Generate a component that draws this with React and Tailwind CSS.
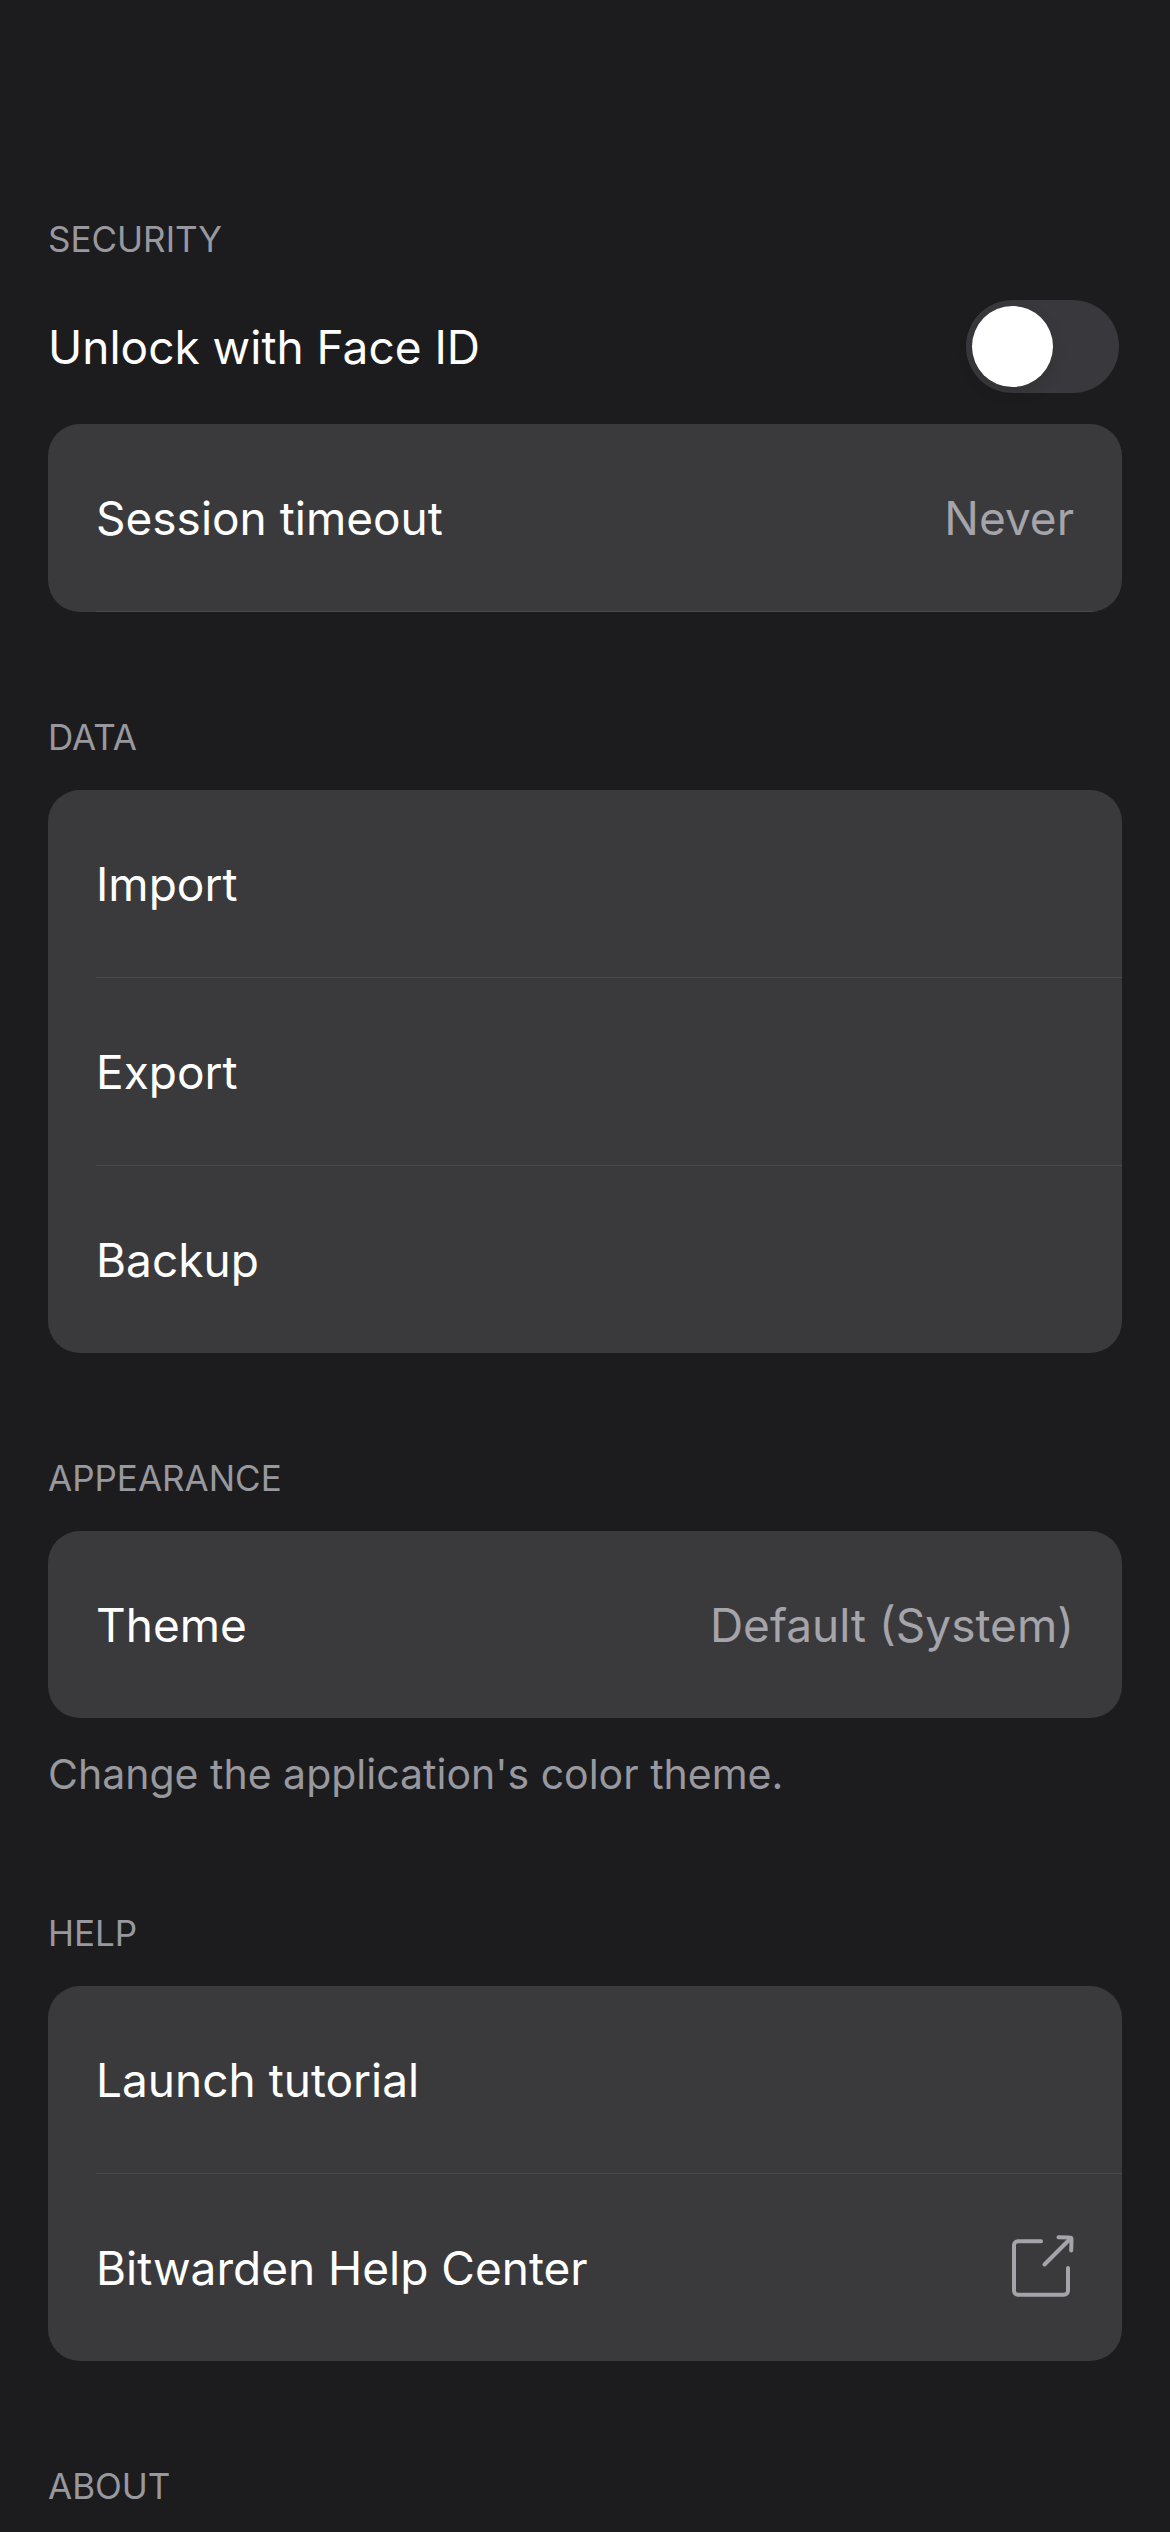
import { useState } from "react";

const rowBase =
  "flex min-h-[187px] w-full items-center justify-between gap-8 pr-12 text-left text-white";

function SectionTitle({ children }) {
  return (
    <h2 className="text-[35px] leading-[48px] font-normal text-[#98989f] uppercase">{children}</h2>
  );
}

function Section({ title, children }) {
  return (
    <section className="mt-[101px]">
      <SectionTitle>{title}</SectionTitle>
      <div className="mt-[29px]">{children}</div>
    </section>
  );
}

function Card({ children }) {
  return <div className="overflow-hidden rounded-[32px] bg-[#3a3a3c] pl-12">{children}</div>;
}

function Row({ divider, children }) {
  return <div className={divider ? "border-b border-[#49494b]" : ""}>{children}</div>;
}

function ActionRow({ label, divider }) {
  return (
    <Row divider={divider}>
      <button type="button" className={rowBase}>
        {label}
      </button>
    </Row>
  );
}

function SelectRow({ id, label, options, divider }) {
  const [value, setValue] = useState(options[0]);
  return (
    <Row divider={divider}>
      <div className={rowBase}>
        <label htmlFor={id}>{label}</label>
        <select
          id={id}
          value={value}
          onChange={(e) => setValue(e.target.value)}
          className="appearance-none bg-transparent text-right text-[#a4a4aa] outline-none [field-sizing:content] [text-align-last:right]"
        >
          {options.map((option) => (
            <option key={option}>{option}</option>
          ))}
        </select>
      </div>
    </Row>
  );
}

function ExternalLinkIcon() {
  return (
    <svg
      viewBox="0 0 62 66"
      className="h-[66px] w-[62px] shrink-0 text-[#a4a4aa]"
      fill="none"
      stroke="currentColor"
      strokeWidth="4"
      strokeLinecap="round"
      strokeLinejoin="round"
      aria-hidden="true"
    >
      <path d="M29 6.3H6a4 4 0 0 0-4 4v45.4a4 4 0 0 0 4 4h46a4 4 0 0 0 4-4V33" />
      <path d="M32.5 29.5 59 3" />
      <path d="M46.5 2.3 57.5 2.6a2 2 0 0 1 2 2L59.2 15.5" />
    </svg>
  );
}

export default function App() {
  const [faceId, setFaceId] = useState(false);
  return (
    <main className="min-h-screen bg-[#1c1c1e] px-12 pt-[215px] pb-[22px] font-['Inter',sans-serif] text-[46px] leading-[60px] text-white">
      <section>
        <SectionTitle>Security</SectionTitle>
        <div className="mt-[37px] flex items-center justify-between pr-[3px]">
          <label htmlFor="face-id">Unlock with Face ID</label>
          <input
            id="face-id"
            type="checkbox"
            role="switch"
            checked={faceId}
            onChange={(e) => setFaceId(e.target.checked)}
            className="flex h-[93px] w-[153px] shrink-0 appearance-none items-center rounded-full bg-[#39393d] p-[6px] before:size-[81px] before:rounded-full before:bg-white before:shadow-[0_6px_16px_rgba(0,0,0,0.1)] checked:justify-end checked:bg-[#30d158]"
          />
        </div>
        <div className="mt-[31px]">
          <Card>
            <SelectRow
              id="session-timeout"
              label="Session timeout"
              options={["Never", "Immediately", "1 minute", "5 minutes"]}
              divider
            />
          </Card>
        </div>
      </section>

      <Section title="Data">
        <Card>
          <ActionRow label="Import" divider />
          <ActionRow label="Export" divider />
          <ActionRow label="Backup" />
        </Card>
      </Section>

      <Section title="Appearance">
        <Card>
          <SelectRow id="theme" label="Theme" options={["Default (System)", "Light", "Dark"]} />
        </Card>
        <p className="mt-[22px] text-[41px] leading-[68px] text-[#98989f]">
          Change the application's color theme.
        </p>
      </Section>

      <Section title="Help">
        <Card>
          <ActionRow label="Launch tutorial" divider />
          <Row>
            <a href="#help-center" className={rowBase}>
              Bitwarden Help Center
              <ExternalLinkIcon />
            </a>
          </Row>
        </Card>
      </Section>

      <section className="mt-[101px]">
        <SectionTitle>About</SectionTitle>
      </section>
    </main>
  );
}
